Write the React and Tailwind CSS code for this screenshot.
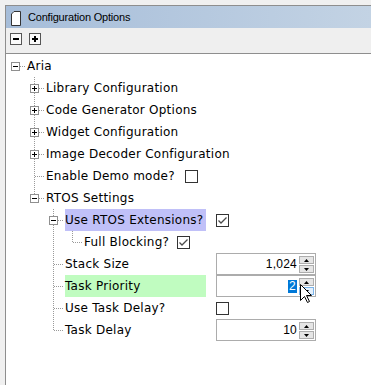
import React from 'react';

const treeFont = { fontFamily: '"DejaVu Sans", Verdana, sans-serif' };

const rows = [
  { label: 'Aria', up: [], own: 'root', exp: 'minus' },
  { label: 'Library Configuration', up: [false], own: 'tee', exp: 'plus' },
  { label: 'Code Generator Options', up: [false], own: 'tee', exp: 'plus' },
  { label: 'Widget Configuration', up: [false], own: 'tee', exp: 'plus' },
  { label: 'Image Decoder Configuration', up: [false], own: 'tee', exp: 'plus' },
  { label: 'Enable Demo mode?', up: [false], own: 'tee', width: 'w-[129px]', value: { kind: 'check', on: false } },
  { label: 'RTOS Settings', up: [false], own: 'ell', exp: 'minus' },
  { label: 'Use RTOS Extensions?', up: [false, false], own: 'tee', exp: 'minus', width: 'w-[141px]', hl: 'bg-[#c0c0f8]', value: { kind: 'check', on: true } },
  { label: 'Full Blocking?', up: [false, false, true], own: 'ell', width: 'w-[83px]', value: { kind: 'check', on: true } },
  { label: 'Stack Size', up: [false, false], own: 'tee', width: 'w-[141px]', value: { kind: 'spin', text: '1,024' } },
  { label: 'Task Priority', up: [false, false], own: 'tee', width: 'w-[141px]', hl: 'bg-[#c0fcc0]', value: { kind: 'spin', text: '2', selected: true, hover: true } },
  { label: 'Use Task Delay?', up: [false, false], own: 'tee', width: 'w-[141px]', value: { kind: 'check', on: false } },
  { label: 'Task Delay', up: [false, false], own: 'ell', width: 'w-[141px]', value: { kind: 'spin', text: '10' } },
];

function GuideCell({ line }) {
  return (
    <svg width="19" height="22" className="shrink-0" shapeRendering="crispEdges">
      {line && <line x1="9.5" y1="0" x2="9.5" y2="22" stroke="#9a9a9a" strokeDasharray="1 1" />}
    </svg>
  );
}

function OwnCell({ own, exp }) {
  return (
    <svg width="19" height="22" className="shrink-0" shapeRendering="crispEdges">
      {own === 'tee' && <line x1="9.5" y1="0" x2="9.5" y2="22" stroke="#9a9a9a" strokeDasharray="1 1" />}
      {own === 'ell' && <line x1="9.5" y1="0" x2="9.5" y2="12" stroke="#9a9a9a" strokeDasharray="1 1" />}
      <line x1={exp ? 14 : 10} y1="11.5" x2="19" y2="11.5" stroke="#9a9a9a" strokeDasharray="1 1" />
      {exp && (
        <g>
          <rect x="5.5" y="7.5" width="8" height="8" fill="#fff" stroke="#8f8f8f" />
          <line x1="7" y1="11.5" x2="12" y2="11.5" stroke="#000" />
          {exp === 'plus' && <line x1="9.5" y1="9" x2="9.5" y2="14" stroke="#000" />}
        </g>
      )}
    </svg>
  );
}

function CheckBox({ on }) {
  return (
    <div className="w-[13px] h-[13px] border border-[#333] bg-white flex items-center justify-center">
      {on && (
        <svg width="11" height="11" viewBox="0 0 11 11">
          <path d="M1.5 5.5 L4 8 L9.5 2.5" fill="none" stroke="#4a4a4a" strokeWidth="1.3" />
        </svg>
      )}
    </div>
  );
}

function Arrow({ down }) {
  return (
    <svg width="5" height="3" viewBox="0 0 5 3">
      <path d={down ? 'M0 0 H5 L2.5 3 Z' : 'M0 3 H5 L2.5 0 Z'} fill="#000" />
    </svg>
  );
}

function Spinner({ text, selected, hover }) {
  return (
    <div className="w-[100px] h-[22px] border border-[#acacac] bg-white flex items-stretch">
      <div
        className="flex-1 flex items-center justify-end pr-[2px] text-[12px] text-black"
        style={{ fontFamily: '"Liberation Sans", Arial, sans-serif' }}
      >
        {selected ? <span className="bg-[#0078d7] text-white leading-[13px] px-px">{text}</span> : text}
      </div>
      <div className="w-[15px] mr-px pt-[2px] pb-px flex flex-col gap-px">
        <div className="flex-1 border border-[#adadad] bg-[#e5e5e5] flex items-center justify-center">
          <Arrow />
        </div>
        <div
          className={`flex-1 border flex items-center justify-center ${
            hover ? 'border-[#7ab4ea] bg-[#e3effb]' : 'border-[#adadad] bg-[#e5e5e5]'
          }`}
        >
          <Arrow down />
        </div>
      </div>
    </div>
  );
}

export default function App() {
  return (
    <div className="relative w-[371px] h-[385px] bg-[#f0f0f0] pt-[5px] pl-[5px] overflow-hidden">
      <div className="h-full border-l border-t border-[#8e8e8e] flex flex-col bg-white">
        {/* title bar */}
        <div className="h-[22px] shrink-0 flex items-center pl-[5px] bg-gradient-to-r from-[#a6bdd9] to-[#c3d3e4]">
          <svg width="10" height="15" viewBox="0 0 10 15" className="mt-[3px]">
            <path d="M0.5 3 L3 0.5 H9.5 V14.5 H0.5 Z" fill="#fff" stroke="#333" />
          </svg>
          <span
            className="ml-[7px] text-[11px] tracking-[-0.2px] text-black"
            style={{ fontFamily: '"Liberation Sans", Arial, sans-serif' }}
          >
            Configuration Options
          </span>
        </div>

        {/* toolbar */}
        <div className="h-[26px] shrink-0 bg-[#efefef] border-b border-[#8e8e8e] flex items-start pt-[5px] pl-[4px] gap-[7px]">
          <div className="w-[12px] h-[12px] border border-[#555] bg-[#fafafa] flex items-center justify-center">
            <div className="w-[6px] h-[2px] bg-black" />
          </div>
          <div className="w-[12px] h-[12px] border border-[#555] bg-[#fafafa] flex items-center justify-center relative">
            <svg width="6" height="6" viewBox="0 0 6 6">
              <rect x="0" y="2" width="6" height="2" fill="#000" />
              <rect x="2" y="0" width="2" height="6" fill="#000" />
            </svg>
          </div>
        </div>

        {/* tree */}
        <div className="flex-1 pt-px text-[12px] tracking-[0.25px] text-black" style={treeFont}>
          {rows.map((r) => (
            <div key={r.label} className="h-[22px] flex items-center">
              {r.up.map((l, i) => (
                <GuideCell key={i} line={l} />
              ))}
              <OwnCell own={r.own} exp={r.exp} />
              <div className={`ml-[2px] h-full flex items-center whitespace-nowrap ${r.width || ''} ${r.hl || ''}`}>
                {r.label}
              </div>
              {r.value && (
                <div className="ml-[10px]">
                  {r.value.kind === 'check' ? (
                    <CheckBox on={r.value.on} />
                  ) : (
                    <Spinner text={r.value.text} selected={r.value.selected} hover={r.value.hover} />
                  )}
                </div>
              )}
            </div>
          ))}
        </div>
      </div>

      {/* mouse pointer */}
      <svg width="13" height="20" viewBox="0 0 13 20" className="absolute left-[300px] top-[284px]">
        <path d="M0.5 0.5 V16.5 L4.5 12.5 L7.5 18.5 L9.5 17.5 L6.5 11.5 H11.5 Z" fill="#fff" stroke="#000" strokeLinejoin="round" />
      </svg>
    </div>
  );
}
